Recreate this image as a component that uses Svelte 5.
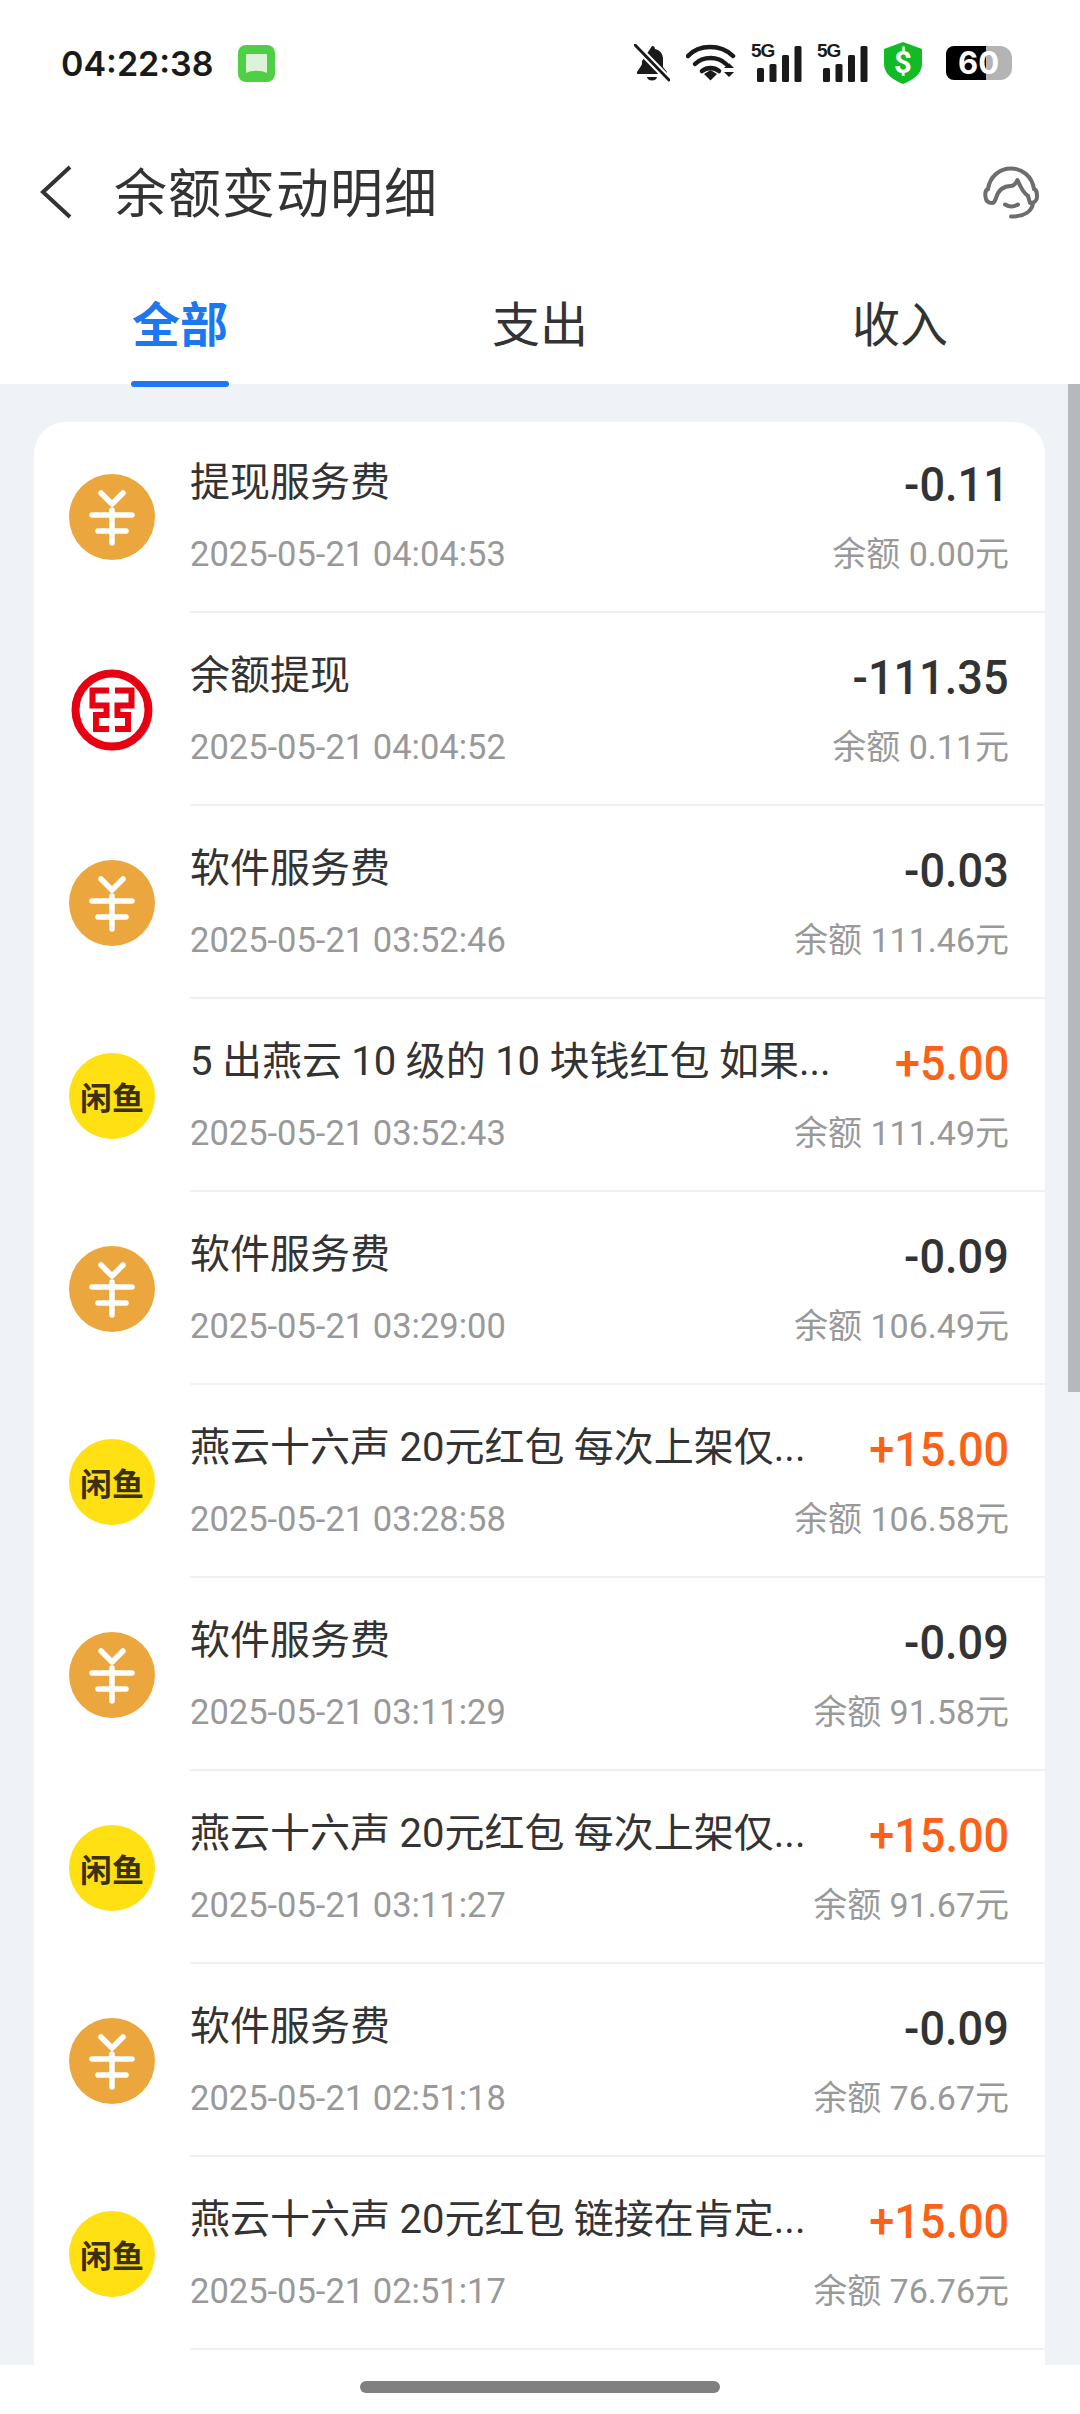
<script>
  const yuan = "yuan";
  const bank = "bank";
  const fish = "fish";

  const rows = [
    { icon: yuan, title: "提现服务费", time: "2025-05-21 04:04:53", amount: "-0.11", balance: "0.00" },
    { icon: bank, title: "余额提现", time: "2025-05-21 04:04:52", amount: "-111.35", balance: "0.11" },
    { icon: yuan, title: "软件服务费", time: "2025-05-21 03:52:46", amount: "-0.03", balance: "111.46" },
    { icon: fish, title: "5 出燕云 10 级的 10 块钱红包 如果...", time: "2025-05-21 03:52:43", amount: "+5.00", balance: "111.49" },
    { icon: yuan, title: "软件服务费", time: "2025-05-21 03:29:00", amount: "-0.09", balance: "106.49" },
    { icon: fish, title: "燕云十六声 20元红包 每次上架仅...", time: "2025-05-21 03:28:58", amount: "+15.00", balance: "106.58" },
    { icon: yuan, title: "软件服务费", time: "2025-05-21 03:11:29", amount: "-0.09", balance: "91.58" },
    { icon: fish, title: "燕云十六声 20元红包 每次上架仅...", time: "2025-05-21 03:11:27", amount: "+15.00", balance: "91.67" },
    { icon: yuan, title: "软件服务费", time: "2025-05-21 02:51:18", amount: "-0.09", balance: "76.67" },
    { icon: fish, title: "燕云十六声 20元红包 链接在肯定...", time: "2025-05-21 02:51:17", amount: "+15.00", balance: "76.76" },
  ];

  const tabs = ["全部", "支出", "收入"];
</script>

{#snippet signal()}
  <div class="signal">
    <span class="signal__label">5G</span>
    <svg width="45" height="36" viewBox="0 0 45 36">
      <rect x="0" y="22" width="7" height="14" rx="1.5" />
      <rect x="12.5" y="18" width="7" height="18" rx="1.5" />
      <rect x="25" y="9" width="7" height="27" rx="1.5" />
      <rect x="37.5" y="0" width="7" height="36" rx="1.5" />
    </svg>
  </div>
{/snippet}

<div class="page">
  <div class="status">
    <div class="status__left">
      <span class="status__time">04:22:38</span>
      <svg class="status__app" width="37" height="37" viewBox="0 0 37 37">
        <rect width="37" height="37" rx="8" fill="#4fcf45" />
        <path d="M9 9h19a1 1 0 0 1 1 1v18c-6-3-15-3-21 0V10a1 1 0 0 1 1-1z" fill="#dcf3d8" />
      </svg>
    </div>
    <div class="status__right">
      <svg width="36" height="38" viewBox="0 0 36 38" class="bell">
        <path d="M18 2a3 3 0 0 1 3 3c5 1 8 5 8 10v8l4 5v2H3v-2l4-6c1-1 1-3 1-5z" fill="#1a1a1a" />
        <path d="M13 33h10a5 3.5 0 0 1-10 0z" fill="#1a1a1a" />
        <path d="M1 1l34 35" stroke="#fff" stroke-width="7" />
        <path d="M1 1l34 35" stroke="#1a1a1a" stroke-width="3" stroke-linecap="round" />
      </svg>
      <svg width="50" height="38" viewBox="0 0 50 38" class="wifi">
        <path d="M2 12C13 0 35 0 47 12" fill="none" stroke="#1a1a1a" stroke-width="4.5" stroke-linecap="round" />
        <path d="M9 20c8-8 23-8 31 0" fill="none" stroke="#1a1a1a" stroke-width="4.5" stroke-linecap="round" />
        <path d="M16 27c5-4 12-4 17 0" fill="none" stroke="#1a1a1a" stroke-width="4.5" stroke-linecap="round" />
        <path d="M18 30l6.5-4 6.5 4-6.5 6.5z" fill="#1a1a1a" />
        <path d="M38 24l5-5 5 5zM38 28h10l-5 5z" fill="#1a1a1a" />
      </svg>
      {@render signal()}
      {@render signal()}
      <svg width="40" height="42" viewBox="0 0 40 42" class="shield">
        <path d="M20 0l19 7v15c0 10-9 16-19 20C10 38 1 32 1 22V7z" fill="#12ba26" />
        <text x="20" y="31" text-anchor="middle" class="shield__sign">$</text>
      </svg>
      <div class="battery">
        <span class="battery__level">60</span>
      </div>
    </div>
  </div>

  <header class="head">
    <svg width="32" height="54" viewBox="0 0 32 54" class="head__back">
      <path d="M30 2L3 27l27 25" fill="none" stroke="#333" stroke-width="4" />
    </svg>
    <h1 class="head__title">余额变动明细</h1>
    <svg width="70" height="70" viewBox="0 0 70 70" class="head__service">
      <g fill="none" stroke="#6d6d6d" stroke-width="4" stroke-linecap="round" stroke-linejoin="round">
        <path d="M13 34C15 21 25 13.5 36 13.5S57 21 59 34" />
        <path d="M13 34C10 35 10 38 10.5 42C11 46 13 48 17 48C19 48 20 46 21 43C23 36 28 31 36 31C39 31 41 28 42.5 25C45 31 48 38 53 41" />
        <path d="M59 34C62 35 62 38 62 42C62 46 59 48 55 48L53 41" />
        <path d="M30 49.5C34 52 39 52 43 49.5" />
        <path d="M58 48C57 56 50 61.5 36 61.5" />
      </g>
    </svg>
  </header>

  <nav class="tabs">
    {#each tabs as tab, i}
      <div class="tab" class:active={i === 0}>{tab}</div>
    {/each}
  </nav>

  <main class="scroller">
    <div class="card">
      {#each rows as row}
        <div class="row">
          <div class="row__icon">
            {#if row.icon === yuan}
              <svg width="86" height="86" viewBox="0 0 86 86">
                <circle cx="43" cy="43" r="43" fill="#eba73d" />
                <g fill="none" stroke="#fff" stroke-width="5.5" stroke-linecap="round" stroke-linejoin="round">
                  <path d="M32 19l11 11 11-11" />
                  <path d="M23 41h40" />
                  <path d="M29 57h28" />
                  <path d="M43 36v33" />
                </g>
              </svg>
            {:else if row.icon === bank}
              <svg width="86" height="86" viewBox="0 0 86 86">
                <circle cx="43" cy="43" r="36.5" fill="none" stroke="#e60012" stroke-width="8" />
                <g fill="none" stroke="#e60012" stroke-width="6">
                  <path d="M40 23.5H23.5V38.5H37.5V48H27V62H40" />
                  <path d="M46 23.5H62.5V38.5H48.5V48H59V62H46" />
                </g>
              </svg>
            {:else}
              <div class="fish">闲鱼</div>
            {/if}
          </div>
          <div class="row__body">
            <div class="row__line">
              <span class="row__title">{row.title}</span>
              <span class="row__amount" class:plus={row.amount.startsWith("+")}>{row.amount}</span>
            </div>
            <div class="row__line row__line--sub">
              <span class="row__time">{row.time}</span>
              <span class="row__balance">余额 {row.balance}元</span>
            </div>
          </div>
        </div>
      {/each}
    </div>
    <div class="scrollbar"></div>
  </main>

  <div class="home">
    <div class="home__bar"></div>
  </div>
</div>

<style>
  :global(body) {
    background: #fff;
    font-family: Roboto, "Noto Sans CJK SC", sans-serif;
  }

  * {
    margin: 0;
    box-sizing: border-box;
  }

  .page {
    width: 1080px;
    height: 2414px;
    display: flex;
    flex-direction: column;
    overflow: hidden;
  }

  .status {
    height: 128px;
    display: flex;
    align-items: center;
    justify-content: space-between;
    padding: 0 68px 2px 61px;
    flex: none;
  }

  .status__left,
  .status__right {
    display: flex;
    align-items: center;
  }

  .status__time {
    font-family: Inter, Roboto, sans-serif;
    font-size: 34px;
    font-weight: 600;
    color: #1a1a1a;
    width: 177px;
  }

  .status__right {
    gap: 15px;
  }

  .wifi {
    margin-left: 1px;
  }

  .signal {
    position: relative;
    width: 51px;
    height: 38px;
    display: flex;
    justify-content: flex-end;
    align-items: flex-end;
  }

  .signal svg {
    fill: #1a1a1a;
  }

  .signal__label {
    position: absolute;
    left: 0;
    top: -3px;
    font-family: "Liberation Sans", sans-serif;
    font-size: 19px;
    font-weight: 700;
    line-height: 20px;
    letter-spacing: -1px;
    color: #1a1a1a;
  }

  .shield__sign {
    font-family: Roboto, sans-serif;
    font-size: 31px;
    font-weight: 700;
    fill: #fff;
  }

  .battery {
    width: 66px;
    height: 34px;
    margin-left: 8px;
    border-radius: 8px 12px 12px 8px;
    background: linear-gradient(to right, #000 40px, #b4b4b4 40px);
    display: flex;
    align-items: center;
    padding-left: 12px;
  }

  .battery__level {
    font-family: Inter, Roboto, sans-serif;
    font-size: 31px;
    font-weight: 700;
    color: #fff;
    line-height: 34px;
  }

  .head {
    height: 128px;
    display: flex;
    align-items: center;
    padding: 0 35px 0 40px;
    flex: none;
  }

  .head__title {
    font-size: 53px;
    font-weight: 400;
    color: #333;
    letter-spacing: 1px;
    margin: 0 0 4px 42px;
    flex: 1;
    font-family: "Noto Sans CJK SC", sans-serif;
  }

  .head__service {
    margin-bottom: 4px;
  }

  .tabs {
    height: 128px;
    display: grid;
    grid-template-columns: repeat(3, 360px);
    flex: none;
    position: relative;
    z-index: 1;
  }

  .tab {
    font-size: 48px;
    color: #333;
    text-align: center;
    padding-top: 32px;
    line-height: 66px;
    position: relative;
    font-family: "Noto Sans CJK SC", sans-serif;
  }

  .tab.active {
    color: #1c77f0;
    font-weight: 700;
  }

  .tab.active::after {
    content: "";
    position: absolute;
    left: 131px;
    width: 98px;
    bottom: -3px;
    height: 6px;
    border-radius: 3px;
    background: #1c77f0;
  }

  .scroller {
    height: 1981px;
    flex: none;
    background: #eff3f8;
    padding: 38px 35px 0 34px;
    overflow: hidden;
    position: relative;
  }

  .card {
    display: flex;
    flex-direction: column;
    background: #fff;
    border-radius: 32px 32px 0 0;
    padding-bottom: 40px;
  }

  .scrollbar {
    position: absolute;
    right: 0;
    top: 0;
    width: 12px;
    height: 1008px;
    background: #b6b8bc;
  }

  .row {
    height: 193px;
    flex: none;
    display: flex;
    align-items: stretch;
    padding-left: 35px;
  }

  .row:first-child {
    margin-top: -2px;
  }

  .row__icon {
    width: 86px;
    flex: none;
    display: flex;
    align-items: center;
    height: 193px;
    padding-top: 1px;
  }

  .row__body {
    flex: 1;
    min-width: 0;
    margin-left: 35px;
    padding: 34px 36px 0 0;
    border-bottom: 2px solid #eef0f3;
  }

  .row__line {
    display: flex;
    justify-content: space-between;
    align-items: center;
    height: 50px;
  }

  .row__line--sub {
    align-items: baseline;
    margin-top: 23px;
  }

  .row__title {
    font-size: 40px;
    color: #333;
    white-space: nowrap;
    word-spacing: -0.5px;
  }

  .row__amount {
    font-size: 49px;
    font-weight: 500;
    color: #333;
    white-space: nowrap;
    margin-top: 10px;
    transform: scaleX(0.92);
    transform-origin: right center;
  }

  .row__amount.plus {
    color: #fb6218;
  }

  .row__time {
    font-size: 34.5px;
    color: #999;
  }

  .row__balance {
    font-size: 34px;
    color: #999;
  }

  .fish {
    width: 86px;
    height: 86px;
    border-radius: 50%;
    background: #ffe013;
    color: #3d3010;
    font-family: "Noto Sans CJK SC", sans-serif;
    font-size: 32px;
    font-weight: 700;
    text-align: center;
    line-height: 86px;
  }

  .home {
    flex: 1;
    display: flex;
    justify-content: center;
    padding-top: 16px;
  }

  .home__bar {
    width: 360px;
    height: 12px;
    border-radius: 6px;
    background: #808080;
  }
</style>
